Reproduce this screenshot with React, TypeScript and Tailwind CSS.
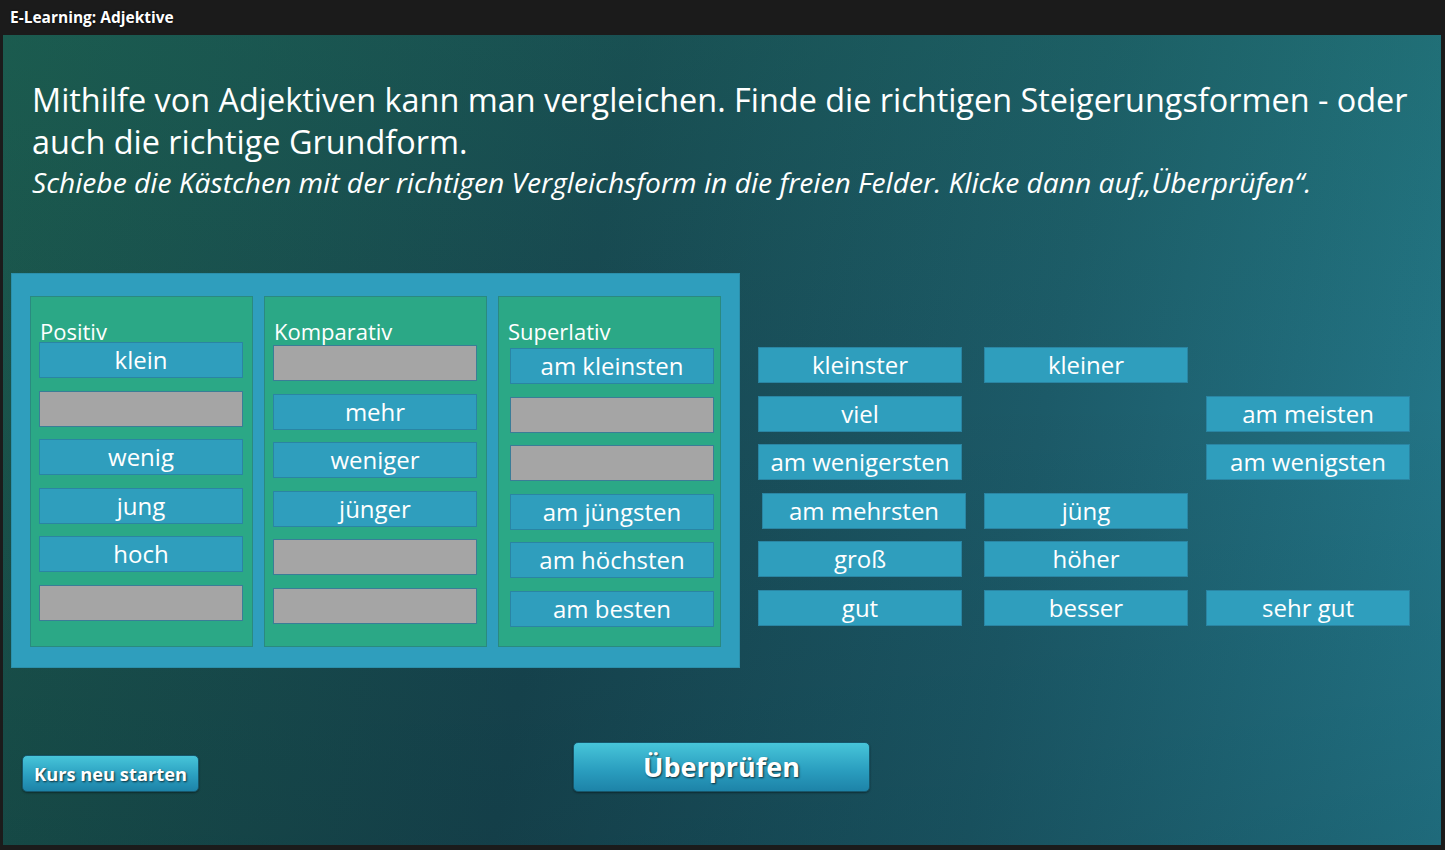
import React from "react";

const font = "font-['Open_Sans',sans-serif]";

type Cell = { text?: string; empty?: boolean };

const columns: { title: string; offset: string; items: Cell[] }[] = [
  {
    title: "Positiv",
    offset: "pt-[45px] pl-[8px]",
    items: [{ text: "klein" }, { empty: true }, { text: "wenig" }, { text: "jung" }, { text: "hoch" }, { empty: true }],
  },
  {
    title: "Komparativ",
    offset: "pt-[48px] pl-[8px]",
    items: [{ empty: true }, { text: "mehr" }, { text: "weniger" }, { text: "jünger" }, { empty: true }, { empty: true }],
  },
  {
    title: "Superlativ",
    offset: "pt-[51px] pl-[11px]",
    items: [{ text: "am kleinsten" }, { empty: true }, { empty: true }, { text: "am jüngsten" }, { text: "am höchsten" }, { text: "am besten" }],
  },
];

// free tiles, row by row, three slots per row (null = empty slot)
const pool: (string | null)[][] = [
  ["kleinster", "kleiner", null],
  ["viel", null, "am meisten"],
  ["am wenigersten", null, "am wenigsten"],
  ["am mehrsten", "jüng", null],
  ["groß", "höher", null],
  ["gut", "besser", "sehr gut"],
];

function Tile({ text, className = "" }: { text: string; className?: string }) {
  return (
    <div
      className={`h-[36px] w-[204px] bg-[#2f9ebd] border border-[#2a85a3] flex items-center justify-center text-white text-[24px] leading-none ${className}`}
    >
      {text}
    </div>
  );
}

function Slot() {
  return <div className="h-[36px] w-[204px] bg-[#a5a5a5] border border-[#3a7d97]" />;
}

export default function App() {
  return (
    <div className={`w-[1445px] h-[850px] bg-[#1b1b1b] flex flex-col overflow-hidden ${font}`}>
      {/* Title bar */}
      <div className="h-[35px] shrink-0 flex items-center px-[10px] text-white text-[15.5px] font-bold [text-shadow:0_0_2px_rgba(0,0,0,0.9)]">
        E-Learning: Adjektive
      </div>

      {/* Stage */}
      <div className="flex-1 ml-[3px] mr-[4px] mb-[5px] bg-[linear-gradient(100deg,#1a554b_0%,#174650_40%,#1c5a68_70%,#24798b_100%)] relative">
        <div className="absolute inset-0 bg-[linear-gradient(180deg,rgba(30,110,90,0.25)_0%,rgba(0,0,0,0)_45%,rgba(0,20,30,0.15)_100%)]" />
        <div className="relative flex flex-col">
          {/* Instructions */}
          <div className="pt-[43px] pl-[29px] text-white">
            <p className="text-[32.4px] leading-[42px] whitespace-nowrap">
              Mithilfe von Adjektiven kann man vergleichen. Finde die richtigen Steigerungsformen - oder
              <br />
              auch die richtige Grundform.
            </p>
            <p className="text-[28.2px] leading-[40px] italic whitespace-nowrap">
              Schiebe die Kästchen mit der richtigen Vergleichsform in die freien Felder. Klicke dann auf„Überprüfen“.
            </p>
          </div>

          {/* Exercise */}
          <div className="flex mt-[71px] ml-[8px]">
            <div className="w-[729px] h-[395px] bg-[#2f9ebd] border border-[#2b8fab] flex gap-[11px] pl-[18px] pt-[22px]">
              {columns.map((col) => (
                <div
                  key={col.title}
                  className={`relative w-[223px] h-[351px] bg-[#2ba886] border border-[#2a8a80] ${col.offset}`}
                >
                  <div className="absolute left-[9px] top-[21px] text-white text-[22px] leading-[26px]">{col.title}</div>
                  <div className="relative flex flex-col gap-[12.5px]">
                    {col.items.map((it, i) =>
                      it.empty ? <Slot key={i} /> : <Tile key={i} text={it.text!} />
                    )}
                  </div>
                </div>
              ))}
            </div>

            <div className="ml-[18px] mt-[74px] grid grid-cols-[226px_222px_204px] gap-y-[12.6px] h-fit">
              {pool.flat().map((t, i) =>
                t ? <Tile key={i} text={t} className={t === "am mehrsten" ? "translate-x-[4px]" : ""} /> : <div key={i} />
              )}
            </div>
          </div>

          {/* Buttons */}
          <div className="flex items-end mt-[74px] ml-[19px]">
            <button className="h-[37px] w-[177px] rounded-[5px] border border-[#17576b] bg-[linear-gradient(180deg,#47c5d9_0%,#2b9fc0_55%,#1d83a8_100%)] text-white text-[18.3px] font-bold [text-shadow:1px_1px_2px_rgba(0,0,0,0.7)] shadow-[0_1px_2px_rgba(0,0,0,0.4)]">
              Kurs neu starten
            </button>
            <button className="ml-[374px] h-[50px] w-[297px] rounded-[5px] border border-[#17576b] bg-[linear-gradient(180deg,#47c5d9_0%,#2b9fc0_55%,#1d83a8_100%)] text-white text-[27px] font-bold [text-shadow:1px_1px_2px_rgba(0,0,0,0.7)] shadow-[0_1px_2px_rgba(0,0,0,0.4)]">
              Überprüfen
            </button>
          </div>
        </div>
      </div>
    </div>
  );
}
